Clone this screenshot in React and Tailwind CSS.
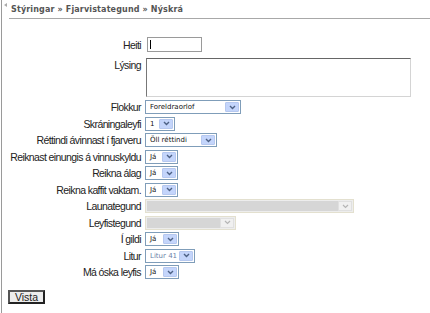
import React from "react";

const labelFont = { fontFamily: '"Liberation Sans", Arial, sans-serif' };

const Select = ({ value, width, blueText, disabled }) => {
	if (disabled) {
		return (
			<div
				className="flex h-[14px] border border-[#e3e0cf] bg-[#ededed] p-px"
				style={{ width }}>
				<div className="flex-1 bg-[#d6d6d6]"></div>
				<div className="flex w-[14px] items-center justify-center border border-[#e0e0e0] bg-[#f0f0f0]">
					<svg width="7" height="5" viewBox="0 0 7 5">
						<path d="M1 1l2.5 2.5L6 1" stroke="#b5b5b5" strokeWidth="1.2" fill="none" />
					</svg>
				</div>
			</div>
		);
	}
	return (
		<div
			className="flex h-[14px] border border-[#7f9db9] bg-white p-px"
			style={{ width }}>
			<div
				className={`flex-1 pl-[3px] text-[7px] leading-[10px] whitespace-nowrap ${
					blueText ? "text-[#6b7fa8]" : "text-[#111]"
				}`}
				style={{ fontFamily: '"DejaVu Sans", Verdana, sans-serif' }}>
				{value}
			</div>
			<div className="flex w-[14px] items-center justify-center rounded-[1px] border border-[#b6c8ef] bg-[#c4d5fb]">
				<svg width="7" height="5" viewBox="0 0 7 5">
					<path d="M1 1l2.5 2.5L6 1" stroke="#4d6185" strokeWidth="1.4" fill="none" />
				</svg>
			</div>
		</div>
	);
};

const Row = ({ label, children }) => (
	<div className="flex h-[14px] items-center">
		<div className="w-[143px] pr-[2px] text-right text-[10.5px] leading-[14px] tracking-[-0.6px] whitespace-nowrap text-[#222]">
			{label}
		</div>
		<div className="pl-[2px]">{children}</div>
	</div>
);

const App = () => {
	return (
		<div
			className="relative h-[313px] w-[430px] overflow-hidden bg-white leading-none"
			style={labelFont}>
			<div className="absolute top-0 left-[1px] h-full w-px bg-[#9a9a9a]"></div>
			<div className="absolute top-[3px] left-[4px] h-0 w-0 border-y-[2px] border-r-[3px] border-y-transparent border-r-[#aaa]"></div>

			<div className="ml-[9px] border-b border-[#a8a8a8] pt-[5px] pb-[3px] pl-[2px] text-[8px] leading-[10px]">
				<span
					className="font-bold tracking-[0.15px] text-[#555]"
					style={{ fontFamily: '"DejaVu Sans", Verdana, sans-serif' }}>
					Stýringar » Fjarvistategund » Nýskrá
				</span>
			</div>

			<div className="pt-[18px]">
				<div className="flex h-[15px] items-center">
					<div className="w-[143px] pr-[2px] text-right text-[10.5px] leading-[14px] tracking-[-0.6px] text-[#222]">Heiti</div>
					<div className="ml-[4px] flex h-[15px] w-[55px] items-center border border-[#9a9a9a] bg-white pl-[2px]">
						<div className="h-[9px] w-px bg-black"></div>
					</div>
				</div>
				<div className="mt-[6px] flex">
					<div className="w-[143px] pr-[2px] pt-[1px] text-right text-[10.5px] leading-[13px] tracking-[-0.6px] text-[#222]">Lýsing</div>
					<div className="ml-[3px] h-[39px] w-[265px] border border-t-[#666] border-l-[#777] border-r-[#d4d4d4] border-b-[#d4d4d4] bg-white"></div>
				</div>

				<div className="mt-[3px] flex flex-col gap-[2.5px]">
					<Row label="Flokkur">
						<Select value="Foreldraorlof" width={96} />
					</Row>
					<Row label="Skráningaleyfi">
						<Select value="1" width={30} />
					</Row>
					<Row label="Réttindi ávinnast í fjarveru">
						<Select value="Öll réttindi" width={72} />
					</Row>
					<Row label="Reiknast einungis á vinnuskyldu">
						<Select value="Já" width={33} />
					</Row>
					<Row label="Reikna álag">
						<Select value="Já" width={33} />
					</Row>
					<Row label="Reikna kaffit vaktam.">
						<Select value="Já" width={33} />
					</Row>
					<Row label="Launategund">
						<Select disabled width={209} />
					</Row>
					<Row label="Leyfistegund">
						<Select disabled width={91} />
					</Row>
					<Row label="Í gildi">
						<Select value="Já" width={34} />
					</Row>
					<Row label="Litur">
						<Select value="Litur 41" width={50} blueText />
					</Row>
					<Row label="Má óska leyfis">
						<Select value="Já" width={34} />
					</Row>
				</div>

				<div className="mt-[11px] pl-[8px]">
					<button className="flex h-[14px] w-[37px] items-center justify-center border-2 border-t-[#555] border-l-[#555] border-r-[#222] border-b-[#222] bg-[#ececec] text-[10.5px] leading-[10px] text-[#222]">
						Vista
					</button>
				</div>
			</div>
		</div>
	);
};

export default App;
